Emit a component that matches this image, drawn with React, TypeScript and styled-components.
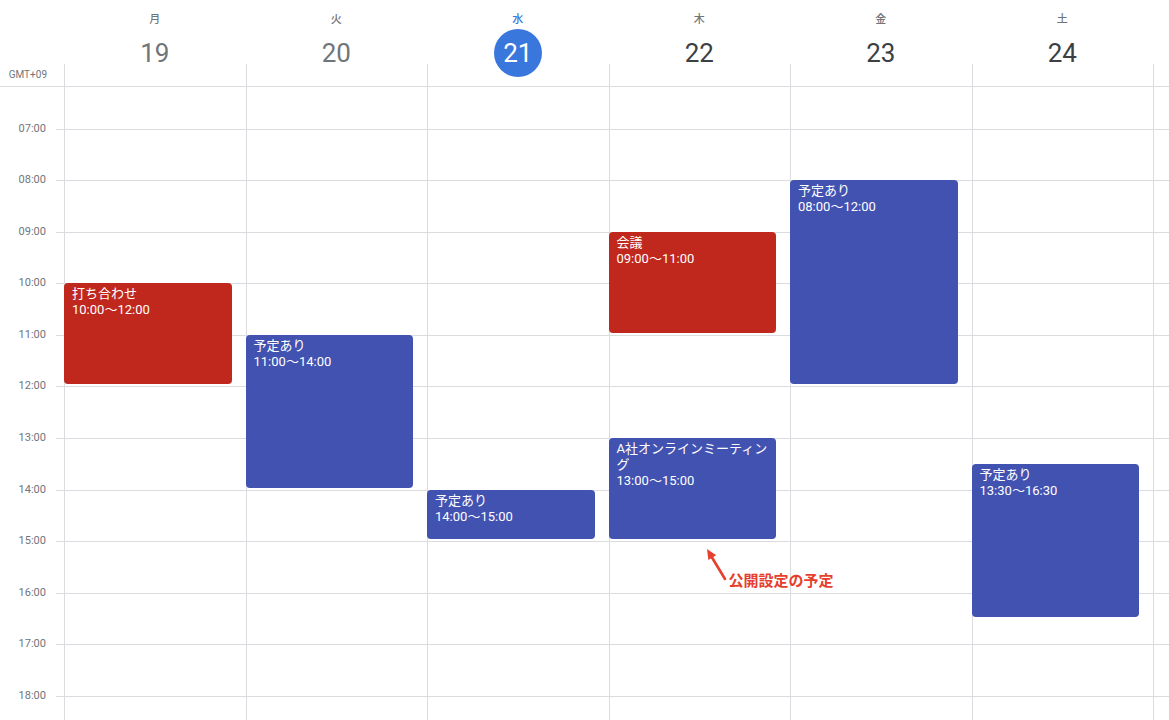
import React from "react";
import styled, { createGlobalStyle } from "styled-components";

const GlobalStyle = createGlobalStyle`
  html, body {
    margin: 0;
    padding: 0;
    background: #fff;
    overflow: hidden;
  }
  body {
    font-family: Roboto, "Noto Sans CJK JP", sans-serif;
    color: #3c4043;
  }
`;

const HOUR = 51.6;
const FIRST_LINE = 41.5;
const FIRST_HOUR = 7;
const LINE = "#dadce0";

type Day = { name: string; date: number; state: "past" | "today" | "future" };
type CalEvent = { day: number; title: string; start: number; end: number; color: "red" | "blue" };

const days: Day[] = [
  { name: "月", date: 19, state: "past" },
  { name: "火", date: 20, state: "past" },
  { name: "水", date: 21, state: "today" },
  { name: "木", date: 22, state: "future" },
  { name: "金", date: 23, state: "future" },
  { name: "土", date: 24, state: "future" },
];

const hours = [7, 8, 9, 10, 11, 12, 13, 14, 15, 16, 17, 18];

const events: CalEvent[] = [
  { day: 0, title: "打ち合わせ", start: 10, end: 12, color: "red" },
  { day: 1, title: "予定あり", start: 11, end: 14, color: "blue" },
  { day: 2, title: "予定あり", start: 14, end: 15, color: "blue" },
  { day: 3, title: "会議", start: 9, end: 11, color: "red" },
  { day: 3, title: "A社オンラインミーティング", start: 13, end: 15, color: "blue" },
  { day: 4, title: "予定あり", start: 8, end: 12, color: "blue" },
  { day: 5, title: "予定あり", start: 13.5, end: 16.5, color: "blue" },
];

const fmt = (t: number) => {
  const h = Math.floor(t);
  const m = Math.round((t - h) * 60);
  return `${String(h).padStart(2, "0")}:${String(m).padStart(2, "0")}`;
};

const Page = styled.div`
  width: 100%;
  height: 720px;
  display: flex;
  flex-direction: column;
  overflow: hidden;
`;

// header
const HeaderRow = styled.div`
  display: flex;
  height: 86px;
  border-bottom: 1px solid ${LINE};
  flex-shrink: 0;
`;

const HeaderGutter = styled.div`
  width: 64px;
  flex-shrink: 0;
  display: flex;
  flex-direction: column;
  justify-content: flex-end;
`;

const GmtLabel = styled.div`
  height: 22px;
  line-height: 22px;
  font-size: 10px;
  color: #70757a;
  text-align: right;
  padding-right: 17px;
`;

const HeaderCell = styled.div<{ $grow?: boolean }>`
  flex: ${(p) => (p.$grow ? "1 1 auto" : "0 0 181.5px")};
  display: flex;
  flex-direction: column;
`;

const HeaderTop = styled.div`
  height: 64px;
  flex-shrink: 0;
  box-sizing: border-box;
  padding-top: 13px;
  display: flex;
  flex-direction: column;
  align-items: center;
  position: relative;
  z-index: 1;
`;

const DayName = styled.div<{ $today: boolean }>`
  font-size: 11px;
  font-weight: 500;
  line-height: 14px;
  margin-bottom: 2px;
  color: ${(p) => (p.$today ? "#3a77dc" : "#70757a")};
`;

const DateNum = styled.div<{ $state: Day["state"] }>`
  flex-shrink: 0;
  width: 48px;
  height: 48px;
  border-radius: 50%;
  display: flex;
  align-items: center;
  justify-content: center;
  font-size: 26px;
  line-height: 48px;
  background: ${(p) => (p.$state === "today" ? "#3a77dc" : "transparent")};
  color: ${(p) =>
    p.$state === "today" ? "#fff" : p.$state === "past" ? "#70757a" : "#3c4043"};
`;

const HeaderStrip = styled.div`
  height: 22px;
  border-left: 1px solid ${LINE};
`;

// body
const Body = styled.div`
  flex: 1;
  display: flex;
  min-height: 0;
`;

const Gutter = styled.div`
  width: 64px;
  flex-shrink: 0;
`;

const TopSpacer = styled.div`
  height: ${FIRST_LINE}px;
`;

const GutterSlot = styled.div`
  height: ${HOUR}px;
  display: grid;
  grid-template-columns: 1fr 8px;
`;

const TimeLabel = styled.div`
  font-size: 11px;
  line-height: 14px;
  color: #70757a;
  text-align: right;
  padding-right: 10px;
  margin-top: -7px;
`;

const Tick = styled.div`
  border-top: 1px solid ${LINE};
`;

const DayColumn = styled.div<{ $grow?: boolean }>`
  flex: ${(p) => (p.$grow ? "1 1 auto" : "0 0 181.5px")};
  box-sizing: border-box;
  border-left: 1px solid ${LINE};
  position: relative;
`;

const HourSlot = styled.div`
  height: ${HOUR}px;
  box-sizing: border-box;
  border-top: 1px solid ${LINE};
`;

const EventCard = styled.div<{ $color: CalEvent["color"] }>`
  position: absolute;
  left: -1px;
  right: 14px;
  box-sizing: border-box;
  padding: 3px 4px 3px 8px;
  border-radius: 4px;
  background: ${(p) => (p.$color === "red" ? "#c0281e" : "#4252b1")};
  color: #fff;
  font-size: 13px;
  line-height: 16px;
  overflow: hidden;
  z-index: 2;
`;

const EventTitle = styled.div`
  word-break: break-all;
`;

const EventTime = styled.div``;

const Callout = styled.div`
  position: absolute;
  left: 92px;
  top: 458px;
  display: flex;
  align-items: flex-end;
  z-index: 3;
`;

const CalloutText = styled.span`
  font-size: 15px;
  line-height: 16px;
  font-weight: 700;
  color: #e5402d;
  margin-left: 1px;
  white-space: nowrap;
`;

function Arrow() {
  return (
    <svg width="26" height="44" viewBox="0 0 26 44">
      <line x1="23" y1="34" x2="10" y2="12.5" stroke="#e5402d" strokeWidth="2.6" strokeLinecap="round" />
      <polygon points="5,4 14.2,10.2 6.4,15" fill="#e5402d" />
    </svg>
  );
}

function Slots() {
  return (
    <>
      <TopSpacer />
      {hours.map((h) => (
        <HourSlot key={h} />
      ))}
    </>
  );
}

export default function App() {
  return (
    <>
      <GlobalStyle />
      <Page>
        <HeaderRow>
          <HeaderGutter>
            <GmtLabel>GMT+09</GmtLabel>
          </HeaderGutter>
          {days.map((d) => (
            <HeaderCell key={d.date}>
              <HeaderTop>
                <DayName $today={d.state === "today"}>{d.name}</DayName>
                <DateNum $state={d.state}>{d.date}</DateNum>
              </HeaderTop>
              <HeaderStrip />
            </HeaderCell>
          ))}
          <HeaderCell $grow>
            <HeaderTop />
            <HeaderStrip />
          </HeaderCell>
        </HeaderRow>

        <Body>
          <Gutter>
            <TopSpacer />
            {hours.map((h) => (
              <GutterSlot key={h}>
                <TimeLabel>{fmt(h)}</TimeLabel>
                <Tick />
              </GutterSlot>
            ))}
          </Gutter>
          {days.map((d, i) => (
            <DayColumn key={d.date}>
              <Slots />
              {events
                .filter((e) => e.day === i)
                .map((e) => (
                  <EventCard
                    key={e.title + e.start}
                    $color={e.color}
                    style={{
                      top: FIRST_LINE + (e.start - FIRST_HOUR) * HOUR,
                      height: (e.end - e.start) * HOUR - 2,
                    }}
                  >
                    <EventTitle>{e.title}</EventTitle>
                    <EventTime>
                      {fmt(e.start)}〜{fmt(e.end)}
                    </EventTime>
                  </EventCard>
                ))}
              {i === 3 && (
                <Callout>
                  <Arrow />
                  <CalloutText>公開設定の予定</CalloutText>
                </Callout>
              )}
            </DayColumn>
          ))}
          <DayColumn $grow>
            <Slots />
          </DayColumn>
        </Body>
      </Page>
    </>
  );
}
